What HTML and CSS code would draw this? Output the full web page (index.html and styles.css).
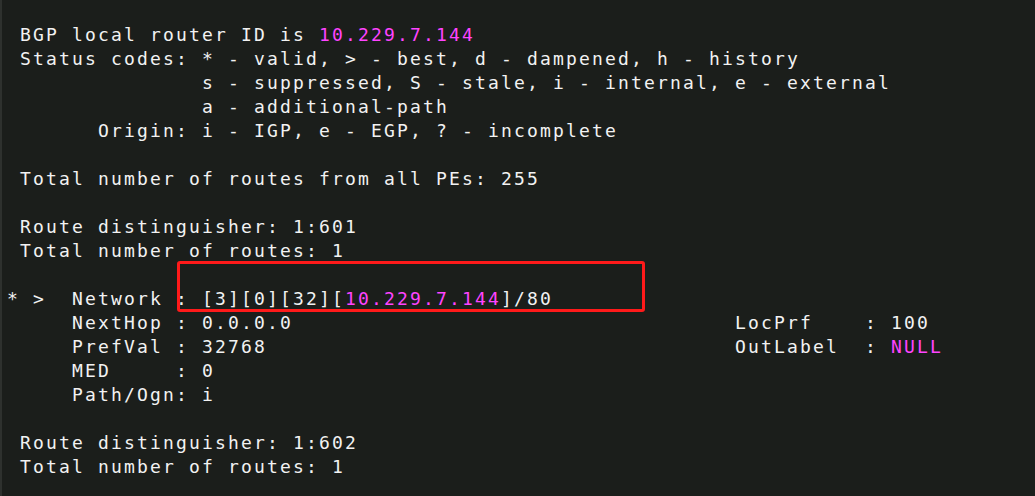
FILE: index.html
```html
<!DOCTYPE html>
<html>
<head>
<meta charset="utf-8">
<link rel="stylesheet" href="styles.css">
</head>
<body>
<div class="term">
<pre class="out"> BGP local router ID is <span class="mg">10.229.7.144</span>
 Status codes: * - valid, &gt; - best, d - dampened, h - history
               s - suppressed, S - stale, i - internal, e - external
               a - additional-path
       Origin: i - IGP, e - EGP, ? - incomplete

 Total number of routes from all PEs: 255

 Route distinguisher: 1:601
 Total number of routes: 1

* &gt;  Network : [3][0][32][<span class="mg">10.229.7.144</span>]/80
     NextHop : 0.0.0.0                                  LocPrf    : 100
     PrefVal : 32768                                    OutLabel  : <span class="mg">NULL</span>
     MED     : 0
     Path/Ogn: i

 Route distinguisher: 1:602
 Total number of routes: 1</pre>
<div class="mark"></div>
</div>
</body>
</html>
```

FILE: styles.css
```css
html, body {
  margin: 0;
  padding: 0;
  background: #1b1e1b;
}
.term {
  position: relative;
  width: 1035px;
  height: 496px;
  overflow: hidden;
  background: #1b1e1b;
  border-left: 2px solid #2e312e;
  box-sizing: border-box;
}
.out {
  margin: 0;
  padding: 23px 0 0 5px;
  font-family: "DejaVu Sans Mono", monospace;
  font-size: 18px;
  letter-spacing: 2.164px;
  line-height: 24px;
  color: #f2f2f2;
}
.mg {
  color: #ff44ff;
}
.mark {
  position: absolute;
  left: 175px;
  top: 261px;
  width: 462px;
  height: 45px;
  border: 3px solid #ff1a1a;
  border-radius: 3px;
}
```
